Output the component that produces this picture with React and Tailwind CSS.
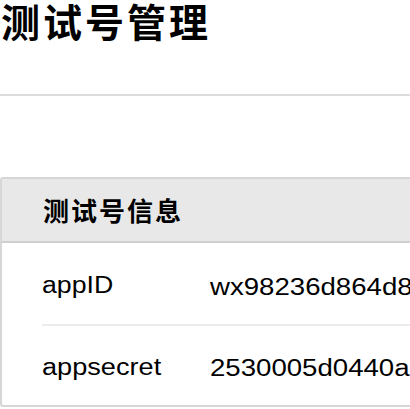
export default function App() {
  const latin = { fontFamily: '"Liberation Sans", Arial, sans-serif' };
  return (
    <div
      className="w-[410px] h-[409px] overflow-hidden bg-white text-black"
      style={{ fontFamily: '"Noto Sans CJK SC", "Liberation Sans", sans-serif' }}
    >
      <h1 className="pl-[1px] text-[39px] leading-[40px] font-bold tracking-[3px] whitespace-nowrap">
        测试号管理
      </h1>
      <div className="mt-[54px] h-[2px] bg-[#dcdcdc]" />
      <div className="mt-[81px] w-[640px] border-2 border-[#d6d6d6] rounded-[3px]">
        <div className="h-[64px] flex items-center pl-[41px] bg-[#e8e8e8] border-b-2 border-[#cfcfcf]">
          <span className="text-[26px] leading-none font-bold tracking-[2px] whitespace-nowrap">测试号信息</span>
        </div>
        <div className="ml-[40px] h-[83px] flex items-center pt-[7px] border-b-2 border-[#ececec] whitespace-nowrap" style={latin}>
          <span className="w-[168px] shrink-0">
            <span className="inline-block origin-left scale-x-[1.16] text-[23px] leading-none">appID</span>
          </span>
          <span className="inline-block origin-left scale-x-[1.2] text-[23px] leading-none">wx98236d864d8a7e1c</span>
        </div>
        <div className="ml-[40px] h-[79px] flex items-center pt-[6px] whitespace-nowrap" style={latin}>
          <span className="w-[168px] shrink-0">
            <span className="inline-block origin-left scale-x-[1.18] text-[23px] leading-none">appsecret</span>
          </span>
          <span className="inline-block origin-left scale-x-[1.2] text-[23px] leading-none">2530005d0440a6c1f3b8e9d2</span>
        </div>
      </div>
    </div>
  );
}
